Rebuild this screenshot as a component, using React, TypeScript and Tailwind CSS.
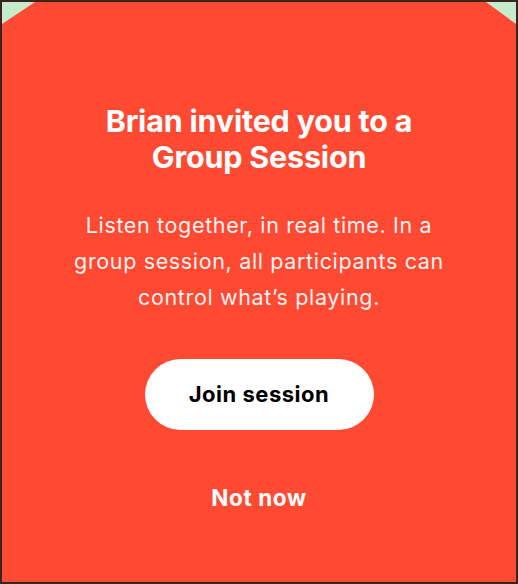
export default function App() {
  return (
    <div className="h-[584px] w-[518px] bg-[#c6ebcc] border-2 border-[#3a2420] overflow-hidden">
      <div className="flex h-full w-full flex-col items-center bg-[#ff4a33] pt-[101px] text-center [clip-path:polygon(33px_0,484px_0,100%_22px,100%_100%,0_100%,0_22px)] [font-family:Inter,'Noto_Sans',sans-serif]">
        <h1 className="text-[30.5px] font-bold leading-[36px] tracking-[-0.2px] text-white">
          Brian invited you to a
          <br />
          Group Session
        </h1>
        <p className="mt-[32px] text-[21.5px] leading-[36px] tracking-[0.65px] text-white/95">
          Listen together, in real time. In a
          <br />
          group session, all participants can
          <br />
          control what’s playing.
        </p>
        <button className="mt-[44px] h-[71px] w-[229px] rounded-full bg-white text-[22px] font-bold tracking-[0.5px] text-black">
          Join session
        </button>
        <button className="mt-[51px] text-[22.5px] font-bold tracking-[0.6px] text-white">Not now</button>
      </div>
    </div>
  );
}
